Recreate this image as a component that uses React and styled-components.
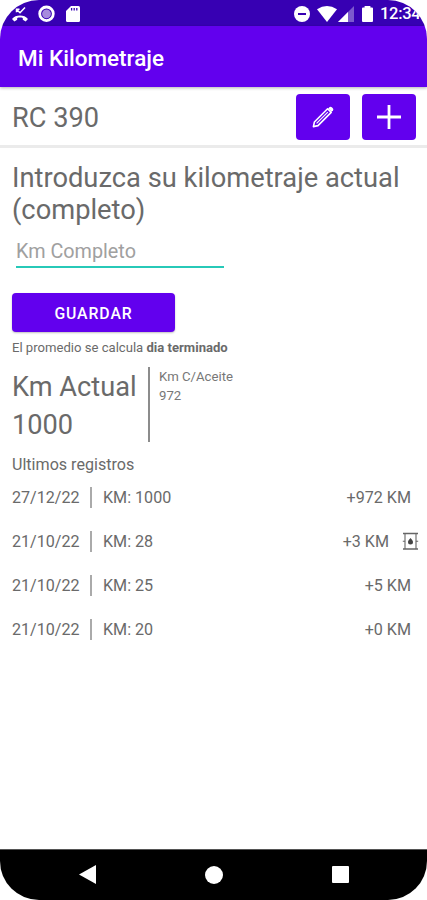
import React from 'react'
import styled, { createGlobalStyle } from 'styled-components'

const records = [
    { id: 1, date: "27/12/22", km: 1000, diff: 972, oil: false },
    { id: 2, date: "21/10/22", km: 28, diff: 3, oil: true },
    { id: 3, date: "21/10/22", km: 25, diff: 5, oil: false },
    { id: 4, date: "21/10/22", km: 20, diff: 0, oil: false },
]

function StatusBar() {
    return (
        <Status>
            <StatusIcons>
                <svg width="18" height="18" viewBox="0 0 18 18" fill="none" stroke="#fff">
                    <path d="M5.5 4.4 L9 7.8 L14 2.4 M5.5 7.2 V4.2 H8.5" strokeWidth="1.5" />
                    <path d="M1 14 C4.5 9.4 13.5 9.4 17 14 L14.6 16.6 L11.8 14.8 V12.9 C10 12.4 8 12.4 6.2 12.9 V14.8 L3.4 16.6 Z" fill="#fff" stroke="none" />
                </svg>
                <svg width="18" height="18" viewBox="0 0 18 18">
                    <circle cx="8.5" cy="8.8" r="6.8" fill="none" stroke="#fff" strokeWidth="2.8" />
                    <circle cx="8.5" cy="8.8" r="4.4" fill="#a78bdd" />
                </svg>
                <svg width="14" height="16" viewBox="0 0 14 16">
                    <path d="M5 0 H12.5 Q14 0 14 1.5 V14.5 Q14 16 12.5 16 H1.5 Q0 16 0 14.5 V5 Z" fill="#fff" />
                    <path d="M5.6 2 V4.6 M8.2 2 V4.6 M10.8 2 V4.6" stroke="#3700b3" strokeWidth="1.3" />
                </svg>
            </StatusIcons>
            <StatusRight>
                <svg width="16" height="16" viewBox="0 0 16 16">
                    <circle cx="8" cy="8" r="8" fill="#fff" />
                    <path d="M4 8 H12" stroke="#3700b3" strokeWidth="2" />
                </svg>
                <WifiIcon width="20" height="16" viewBox="0 0 20 16">
                    <path d="M0 3.2 Q10 -3.2 20 3.2 L10 16 Z" fill="#fff" />
                </WifiIcon>
                <SignalIcon width="16" height="16" viewBox="0 0 16 16">
                    <path d="M16 0 V16 H0 Z" fill="#fff" opacity="0.35" />
                    <path d="M10 6 V16 H0 Z" fill="#fff" />
                </SignalIcon>
                <BatteryIcon width="11" height="16" viewBox="0 0 11 16">
                    <path d="M2.6 0 H8.4 V1.6 H10 Q11 1.6 11 2.6 V15 Q11 16 10 16 H1 Q0 16 0 15 V2.6 Q0 1.6 1 1.6 H2.6 Z" fill="#fff" />
                </BatteryIcon>
                <Clock>12:34</Clock>
            </StatusRight>
        </Status>
    )
}

function OilIcon() {
    return (
        <svg width="17" height="18" viewBox="0 0 17 18" fill="none" stroke="#666">
            <path d="M1 1.5 H16 M1 17 H16" strokeWidth="1.4" />
            <path d="M3 1.5 V17 M14 1.5 V17 M0.8 9.3 H3.6 M13.4 9.3 H16.2" strokeWidth="1.1" />
            <path d="M8.5 6 C9.6 7.5 11 8.6 11 10 A2.5 2.5 0 0 1 6 10 C6 8.6 7.4 7.5 8.5 6 Z" fill="#444" stroke="none" />
        </svg>
    )
}

function App() {
  return (
    <Phone>
        <GlobalStyle />
        <StatusBar />
        <AppBar>Mi Kilometraje</AppBar>
        <Header>
            <VehicleName>RC 390</VehicleName>
            <HeaderBtns>
                <IconBtn aria-label="Editar">
                    <svg width="24" height="24" viewBox="0 0 24 24" fill="none" stroke="#fff" strokeWidth="1.6">
                        <path d="M2.4 21.6 L3.4 17 L16.6 3.8 L20.2 7.4 L7 20.6 Z" strokeLinejoin="round" />
                        <path d="M5.6 18.4 L16.8 7.2" strokeWidth="1.1" />
                        <path d="M17.2 3.4 L18.6 2 Q19.7 1.2 20.8 2.2 L21.8 3.2 Q22.8 4.3 22 5.4 L20.6 6.8 Z" fill="#fff" stroke="none" />
                    </svg>
                </IconBtn>
                <IconBtn aria-label="Agregar">
                    <svg width="24" height="24" viewBox="0 0 24 24">
                        <path d="M12 0 V24 M0 12 H24" stroke="#fff" strokeWidth="2.8" />
                    </svg>
                </IconBtn>
            </HeaderBtns>
        </Header>
        <Content>
            <Title>Introduzca su kilometraje actual (completo)</Title>
            <KmInput placeholder="Km Completo" />
            <SaveBtn>GUARDAR</SaveBtn>
            <Note>El promedio se calcula <b>dia terminado</b></Note>
            <Summary>
                <Current>
                    <span>Km Actual</span>
                    <span>1000</span>
                </Current>
                <Oil>
                    <span>Km C/Aceite</span>
                    <span>972</span>
                </Oil>
            </Summary>
            <ListTitle>Ultimos registros</ListTitle>
            <List>
                {records.map((item) =>
                    <Row key={item.id}>
                        <RowDate>{item.date}</RowDate>
                        <RowKm>KM: {item.km}</RowKm>
                        <RowDiff>+{item.diff} KM</RowDiff>
                        {item.oil && <OilSlot><OilIcon /></OilSlot>}
                    </Row>
                )}
            </List>
        </Content>
        <NavBar>
            <svg width="17" height="19" viewBox="0 0 17 19"><path d="M0 9.5 L17 0 V19 Z" fill="#fff" /></svg>
            <svg width="18" height="18" viewBox="0 0 18 18"><circle cx="9" cy="9" r="9" fill="#fff" /></svg>
            <svg width="17" height="17" viewBox="0 0 17 17"><rect width="17" height="17" rx="1" fill="#fff" /></svg>
        </NavBar>
    </Phone>
  )
}

export default App

const GlobalStyle = createGlobalStyle`
  * {
    box-sizing: border-box;
  }
  body {
    margin: 0;
    background-color: white;
    font-family: Roboto, "Liberation Sans", sans-serif;
    color: #6a6a6a;
  }
  svg {
    display: block;
    flex-shrink: 0;
  }
`

const Phone = styled.div`
  width: 427px;
  height: 900px;
  display: flex;
  flex-direction: column;
  overflow: hidden;
  border-radius: 39px;
  background-color: white;
`

const Status = styled.div`
  height: 26px;
  flex-shrink: 0;
  display: flex;
  justify-content: space-between;
  align-items: center;
  padding-left: 11px;
  background-color: #3700b3;
`

const StatusIcons = styled.div`
  display: flex;
  align-items: center;
  gap: 9px;
  padding-top: 1px;

  svg:last-child {
    margin-left: 1px;
  }
`

const StatusRight = styled.div`
  display: flex;
  align-items: center;
  width: 133px;
  padding-top: 1px;
`

const WifiIcon = styled.svg`
  margin-left: 7px;
`

const SignalIcon = styled.svg`
  margin-left: 1px;
`

const BatteryIcon = styled.svg`
  margin-left: 8px;
`

const Clock = styled.span`
  margin: 1px 0 0 7px;
  font-size: 16.5px;
  font-weight: 500;
  line-height: 18px;
  letter-spacing: -0.3px;
  white-space: nowrap;
  color: white;
`

const AppBar = styled.div`
  height: 61px;
  flex-shrink: 0;
  display: flex;
  align-items: center;
  padding: 3px 18px 0;
  font-size: 22.5px;
  font-weight: 500;
  color: white;
  background-color: #6200ee;
  box-shadow: 0 1px 3px rgba(0, 0, 0, 0.3);
  z-index: 1;
`

const Header = styled.div`
  height: 61px;
  flex-shrink: 0;
  display: flex;
  justify-content: space-between;
  align-items: center;
  padding: 0 10.6px 2px 12px;
  border-bottom: 3px solid #ebebeb;
`

const VehicleName = styled.div`
  padding-top: 6px;
  font-size: 27.2px;
`

const HeaderBtns = styled.div`
  display: flex;
  gap: 11.6px;
  padding-top: 3px;
`

const IconBtn = styled.button`
  width: 54.4px;
  height: 46px;
  display: flex;
  justify-content: center;
  align-items: center;
  padding: 0;
  border: none;
  border-radius: 4px;
  background-color: #6200ee;
`

const Content = styled.div`
  flex: 1;
  display: flex;
  flex-direction: column;
  align-items: flex-start;
  padding: 14px 16px 0 12px;
`

const Title = styled.div`
  font-size: 27.3px;
  line-height: 32px;
`

const KmInput = styled.input`
  width: 208px;
  height: 42px;
  margin-left: 4px;
  padding: 11px 0 0;
  border: none;
  border-bottom: 2px solid #27c9b8;
  outline: none;
  font-family: inherit;
  font-size: 19.8px;
  background-color: transparent;

  &::placeholder {
    color: #a0a0a0;
  }
`

const SaveBtn = styled.button`
  width: 163px;
  height: 39px;
  margin-top: 25px;
  padding: 1px 0 0;
  border: none;
  border-radius: 4px;
  font-family: inherit;
  font-size: 15.8px;
  font-weight: 500;
  letter-spacing: 0.9px;
  color: white;
  background-color: #6200ee;
  box-shadow: 0 1px 2px rgba(0, 0, 0, 0.25);
`

const Note = styled.div`
  margin-top: 8px;
  font-size: 13.1px;
  line-height: 16px;
`

const Summary = styled.div`
  display: flex;
  margin-top: 11px;
`

const Current = styled.div`
  width: 138px;
  height: 75px;
  display: flex;
  flex-direction: column;
  padding-top: 1px;
  border-right: 2px solid #8c8c8c;
  font-size: 27.2px;
  line-height: 38px;
`

const Oil = styled.div`
  display: flex;
  flex-direction: column;
  padding-left: 9px;
  font-size: 13.2px;
  line-height: 19px;
  color: #777;
`

const ListTitle = styled.div`
  margin-top: 13px;
  font-size: 16.1px;
  line-height: 20px;
`

const List = styled.div`
  width: 100%;
  display: flex;
  flex-direction: column;
  gap: 24.2px;
  margin-top: 12px;
`

const Row = styled.div`
  height: 20px;
  display: flex;
  align-items: center;
  font-size: 16.1px;
  line-height: 20px;
`

const RowDate = styled.span`
  width: 80px;
  padding-top: 1px;
  border-right: 2px solid #aaa;
`

const RowKm = styled.span`
  padding: 1px 0 0 11px;
`

const RowDiff = styled.span`
  margin-left: auto;
  padding-top: 1px;
`

const OilSlot = styled.span`
  margin: 0 -8px 0 13px;
`

const NavBar = styled.div`
  height: 51px;
  flex-shrink: 0;
  display: flex;
  justify-content: space-between;
  align-items: center;
  padding: 0 78px 1px 79px;
  border-top: 1px solid #555;
  background-color: black;
`
